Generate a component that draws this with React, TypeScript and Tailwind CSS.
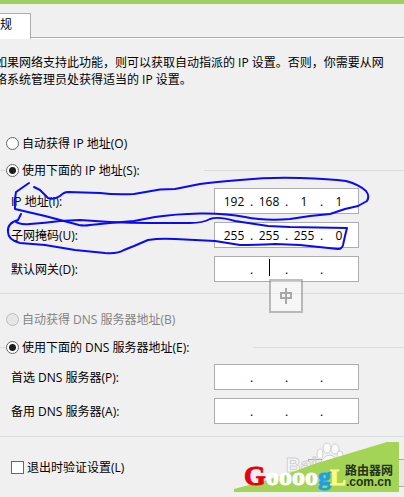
import { Fragment, useState } from 'react'
import { clsx } from 'clsx'

interface AddressFieldProps {
  id: string
  label: string
  defaultParts?: string[]
  editing?: boolean
}

const EMPTY = ['', '', '', '']

function AddressField({ id, label, defaultParts = EMPTY, editing }: AddressFieldProps) {
  const [parts, setParts] = useState(defaultParts)

  function update(index: number, value: string) {
    setParts(prev => prev.map((p, i) => (i === index ? value : p)))
  }

  return (
    <div className="flex items-center pl-[11px]">
      <label htmlFor={`${id}-0`} className="w-[203px] shrink-0">{label}</label>
      <div className="relative flex h-[26px] w-[145px] items-center justify-center border border-[#abadb3] bg-white">
        {parts.map((part, i) => (
          <Fragment key={i}>
            {i > 0 && <span className="w-[5px] text-center">.</span>}
            <input
              id={`${id}-${i}`}
              type="text"
              aria-label={`${label} ${i + 1}`}
              value={part}
              maxLength={3}
              onChange={e => update(i, e.target.value)}
              className="h-5 w-[30px] bg-transparent text-center outline-none"
            />
          </Fragment>
        ))}
        {editing && (
          <>
            <span className="absolute left-[54px] top-0.5 h-[17px] w-px bg-black" />
            {/* input method indicator */}
            <span className="absolute left-[54px] top-[22px] z-10 flex h-[34px] w-[34px] items-center justify-center border-2 border-black/25 bg-white/40">
              <svg width="12" height="16" viewBox="0 0 12 16" fill="none" stroke="#a8a8a8" strokeWidth="2">
                <path d="M1 5H11V10H1ZM6 0V16" />
              </svg>
            </span>
          </>
        )}
      </div>
    </div>
  )
}

interface OptionProps {
  name: string
  label: string
  checked: boolean
  disabled?: boolean
  line?: boolean
  onSelect?: () => void
}

function Option({ name, label, checked, disabled, line, onSelect }: OptionProps) {
  return (
    <div className="flex h-[18px] items-center">
      <span className={clsx('h-px w-1.5 shrink-0', line && 'bg-[#dcdcdc]')} />
      <label className={clsx('flex items-center gap-[3px] whitespace-nowrap', disabled && 'text-[#838383]')}>
        <input
          type="radio"
          name={name}
          checked={checked}
          disabled={disabled}
          onChange={() => onSelect?.()}
          className="size-[13px] shrink-0 appearance-none rounded-full border border-[#666] bg-white checked:bg-[radial-gradient(circle,#1c1c1c_3px,#fff_4px)] disabled:border-[#bcbcbc] disabled:bg-[#e6e6e6]"
        />
        {label}
      </label>
      {line && <span className="ml-16 h-px flex-1 bg-[#dcdcdc]" />}
    </div>
  )
}

function Scribbles() {
  return (
    <svg
      className="pointer-events-none absolute left-0 top-0 z-20"
      width="404"
      height="280"
      viewBox="0 0 404 280"
      fill="none"
      stroke="#0a0af5"
      strokeWidth="2"
      strokeLinecap="round"
      strokeLinejoin="round"
    >
      <path d="M29 183L16 192Q14 200 15 209L45 216L79 225Q84 226 90 225L110 223L134 221L155 217Q175 214 200 213.5Q225 213 245 217Q265 221 290 219L310 216L330 214L345 209L358 206L367 201Q370 196 366 191Q358 184 346 181Q330 179 300 178Q270 177 240 180Q215 182 200 184L175 189L160 189.5L134 194Q115 195 100 193L68 192Q64 192 60 196Q54 200 48 198L40 190L34 187" />
      <path d="M21 214L18 220Q7 223 8 232Q8 240 20 243L45 245L75 250L105 253Q118 254 124 250L134 246L148 240Q160 238 175 239L215 241L240 245Q255 245 275 244L300 245L338 249Q342 249 343 245L345 236L347 228L290 227L268 226L235 221Q218 216 210 219Q203 223 190 223L150 223Q130 223 110 222L80 220L60 221Q45 223 30 224Q19 225 15 221" />
    </svg>
  )
}

function SiteLogo() {
  return (
    <svg
      className="pointer-events-none absolute bottom-[5px] right-[5px]"
      width="165"
      height="50"
      viewBox="0 0 165 50"
    >
      <g fill="#fafafa" stroke="#d0d0d0" strokeWidth="1">
        <text x="52" y="30" className="font-['Liberation_Sans'] text-[20px] font-bold">Bai</text>
        <ellipse cx="86" cy="12" rx="3" ry="5" />
        <ellipse cx="93" cy="6" rx="4" ry="5" />
        <ellipse cx="101" cy="7" rx="4" ry="5" />
        <ellipse cx="106" cy="13" rx="3" ry="4" />
        <path d="M96 13Q102 14 105 22H86Q90 13 96 13Z" />
      </g>
      <path d="M0 47Q45 36 80 22L153 0H165V50H0Z" fill="#a3d455" />
      <g className="font-['Liberation_Serif'] font-bold">
        <text x="10" y="43" className="text-[28px]" fill="#e60012" stroke="#e60012">G</text>
        <text x="32" y="43" className="text-[26px]" fill="#fff" stroke="#fff">oooo</text>
        <text x="84" y="43" className="text-[26px]" fill="#1e9fe8" stroke="#1e9fe8">g</text>
        <text x="96" y="43" className="text-[24px]" fill="#fbf98c" stroke="#fbf98c">L</text>
      </g>
      <g fill="#26301a">
        <text x="111" y="33" className="font-['Noto_Sans_CJK_SC'] text-[12px] font-bold">路由器网</text>
        <text x="112" y="44" className="font-['Liberation_Sans'] text-[12px] font-bold">.com.cn</text>
      </g>
    </svg>
  )
}

export default function App() {
  const [ipMode, setIpMode] = useState('manual')
  const [validate, setValidate] = useState(false)

  return (
    <main className="relative min-h-screen overflow-hidden bg-[#f0f0f0] font-['Open_Sans','Noto_Sans_CJK_SC',sans-serif] text-[12px] leading-[17px] text-black">
      <div className="h-1 bg-[#a1cf5f]" />

      <div className="mt-[9px] flex items-end" role="tablist">
        <button
          role="tab"
          aria-selected="true"
          className="-ml-3 flex h-[26px] w-[43px] items-center border-r border-t border-[#acacac] bg-white pb-1"
        >
          常规
        </button>
        <div className="h-0.5 flex-1 border-t border-[#acacac] bg-white" />
      </div>

      <p className="-ml-[5px] mt-[15px] whitespace-nowrap">
        如果网络支持此功能，则可以获取自动指派的 IP 设置。否则，你需要从网
        <br />
        络系统管理员处获得适当的 IP 设置。
      </p>

      <section className="mt-[46px]">
        <Option
          name="ip"
          label="自动获得 IP 地址(O)"
          checked={ipMode === 'auto'}
          onSelect={() => setIpMode('auto')}
        />
        <div className="mt-[9px]">
          <Option
            name="ip"
            label="使用下面的 IP 地址(S):"
            checked={ipMode === 'manual'}
            line
            onSelect={() => setIpMode('manual')}
          />
        </div>
        <div className="mt-[9px] space-y-2">
          <AddressField id="address" label="IP 地址(I):" defaultParts={['192', '168', '1', '1']} />
          <AddressField id="mask" label="子网掩码(U):" defaultParts={['255', '255', '255', '0']} />
          <AddressField id="gateway" label="默认网关(D):" editing />
        </div>
      </section>

      <section className="mt-[11px] border-t border-[#dcdcdc] pt-4">
        <Option name="dns" label="自动获得 DNS 服务器地址(B)" checked={false} disabled />
        <div className="mt-[10px]">
          <Option name="dns" label="使用下面的 DNS 服务器地址(E):" checked line />
        </div>
        <div className="mt-2 space-y-2">
          <AddressField id="dns1" label="首选 DNS 服务器(P):" />
          <AddressField id="dns2" label="备用 DNS 服务器(A):" />
        </div>
      </section>

      <footer className="mt-3 flex items-start justify-between border-t border-[#dcdcdc] pt-[21px]">
        <label className="flex h-[18px] items-center gap-[3px] pl-[11px]">
          <input
            type="checkbox"
            checked={validate}
            onChange={e => setValidate(e.target.checked)}
            className="size-[13px] appearance-none border border-[#666] bg-white checked:bg-[#333]"
          />
          退出时验证设置(L)
        </label>
        <button aria-label="高级" className="mt-px h-7 w-24 border-y border-l border-[#adadad] bg-[#e8e8e8]" />
      </footer>

      <Scribbles />
      <SiteLogo />
    </main>
  )
}
